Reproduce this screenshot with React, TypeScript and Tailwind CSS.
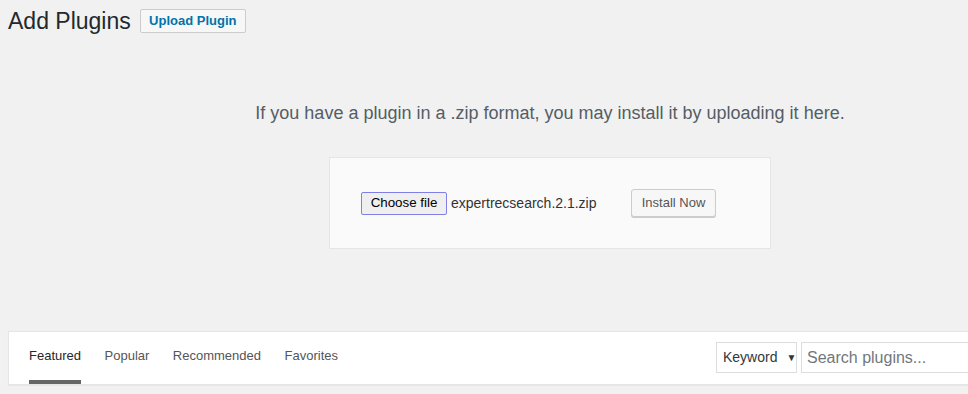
import React from 'react';

const tabs = ['Featured', 'Popular', 'Recommended', 'Favorites'];

export default function App() {
  return (
    <div className="w-[968px] h-[394px] overflow-hidden bg-[#f1f1f1] font-['Liberation_Sans',Arial,sans-serif]">
      <div className="ml-[8px] w-[1084px]">
        {/* Header */}
        <div className="flex items-center gap-[9px] pt-[6px]">
          <h1 className="text-[23px] leading-[30px] text-[#23282d] font-normal">Add Plugins</h1>
          <button className="h-[24px] w-[106px] border border-[#cccccc] bg-[#f7f7f7] rounded-[2px] text-[13px] font-bold text-[#0073aa]">
            Upload Plugin
          </button>
        </div>

        {/* Upload section */}
        <p className="mt-[65px] text-center text-[18px] leading-[24px] text-[#555d66]">
          If you have a plugin in a .zip format, you may install it by uploading it here.
        </p>
        <div className="mx-auto mt-[32px] w-[442px] h-[92px] border border-[#e5e5e5] bg-[#fafafa] flex items-center pl-[31px]">
          <span className="h-[23px] w-[86px] flex items-center justify-center border border-[#7f7fe6] bg-[#efefef] rounded-[2px] text-[13.33px] text-black">
            Choose file
          </span>
          <span className="w-[184px] pl-[4px] text-[14px] text-[#333]">expertrecsearch.2.1.zip</span>
          <button className="h-[28px] w-[85px] border border-[#cccccc] bg-[#f7f7f7] rounded-[3px] shadow-[0_1px_0_#cccccc] text-[13px] text-[#555]">
            Install Now
          </button>
        </div>

        {/* Filter bar */}
        <div className="mt-[82px] h-[54px] border border-[#e5e5e5] bg-white shadow-[0_1px_1px_rgba(0,0,0,0.04)] flex">
          <ul className="flex gap-[23.5px] pl-[20px]">
            {tabs.map((t, i) => (
              <li
                key={t}
                className={`pt-[15px] pb-[15px] text-[13px] leading-[18px] border-b-4 ${
                  i === 0 ? 'border-[#666666] text-[#23282d]' : 'border-transparent text-[#555]'
                }`}
              >
                {t}
              </li>
            ))}
          </ul>
          <div className="ml-auto mt-[10px] flex gap-[4px] pr-[10px] self-start">
            <div className="h-[31px] w-[81px] border border-[#dddddd] bg-white flex items-center pl-[6px] text-[14px] text-[#32373c]">
              Keyword
              <span className="ml-[9px] text-[10px] text-[#32373c]">▼</span>
            </div>
            <div className="h-[31px] w-[280px] border border-[#dddddd] bg-white flex items-center pl-[5px] text-[16px] text-[#72777c]">
              Search plugins...
            </div>
          </div>
        </div>
      </div>
    </div>
  );
}
